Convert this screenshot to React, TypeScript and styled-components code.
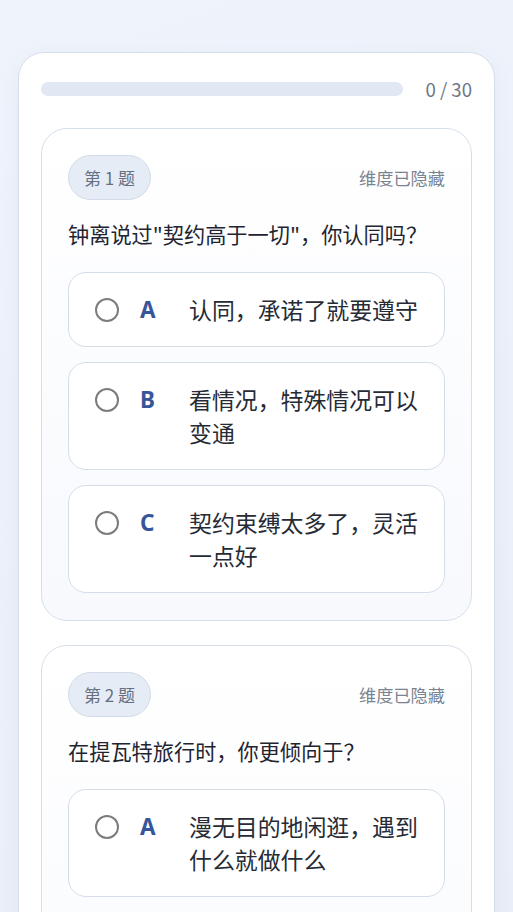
import React from "react";
import styled, { createGlobalStyle } from "styled-components";

const Global = createGlobalStyle`
  html, body { margin: 0; padding: 0; }
  body {
    font-family: "Noto Sans CJK SC", "Noto Sans", sans-serif;
    background: linear-gradient(160deg, #eff3fb 0%, #eaeff8 60%, #e8edf7 100%);
    min-height: 100vh;
  }
`;

const Page = styled.div`
  padding: 52px 18px 24px;
`;

const Shell = styled.div`
  background: #ffffff;
  border: 1px solid #d6deec;
  border-radius: 26px;
  padding: 22px;
  display: flex;
  flex-direction: column;
  gap: 26px;
  box-shadow: 0 6px 20px rgba(60, 80, 130, 0.05);
`;

const ProgressRow = styled.div`
  display: flex;
  align-items: center;
  gap: 22px;
`;

const Track = styled.div`
  flex: 1;
  height: 14px;
  border-radius: 7px;
  background: #e1e8f3;
`;

const Count = styled.div`
  font-size: 18.6px;
  line-height: 27px;
  color: #6e7686;
  white-space: nowrap;
`;

const QuestionList = styled.div`
  display: flex;
  flex-direction: column;
  gap: 24px;
`;

const QuestionCard = styled.div`
  border: 1px solid #d7dfec;
  border-radius: 26px;
  padding: 26px 26px 27px;
  background: linear-gradient(180deg, #ffffff 0%, #f7f9fd 100%);
`;

const Header = styled.div`
  display: flex;
  align-items: center;
  justify-content: space-between;
  margin-bottom: 18px;
`;

const Badge = styled.div`
  background: #e6ecf6;
  border: 1px solid #d2dbea;
  border-radius: 23px;
  padding: 10px 15px;
  font-size: 17px;
  line-height: 23px;
  color: #667082;
`;

const Hidden = styled.div`
  font-size: 17.2px;
  line-height: 23px;
  color: #7a8392;
`;

const Prompt = styled.div`
  font-size: 21.2px;
  line-height: 32px;
  color: #1f2430;
  margin-bottom: 22px;
`;

const Options = styled.div`
  display: flex;
  flex-direction: column;
  gap: 15px;
`;

const Option = styled.div`
  display: grid;
  grid-template-columns: 24px 28px 1fr;
  column-gap: 21px;
  align-items: start;
  border: 1px solid #d5ddeb;
  border-radius: 18px;
  background: #ffffff;
  padding: 20px 20px 20px 26px;
`;

const RadioCell = styled.div`
  height: 33px;
  display: flex;
  align-items: center;
`;

const Radio = styled.div`
  width: 24px;
  height: 24px;
  box-sizing: border-box;
  border: 2px solid #7c7c7c;
  border-radius: 50%;
  background: #fff;
`;

const Letter = styled.div`
  font-family: "Noto Sans", "Noto Sans CJK SC", sans-serif;
  font-weight: 700;
  font-size: 22.5px;
  line-height: 33px;
  color: #36559a;
`;

const OptionText = styled.div`
  font-size: 22.9px;
  line-height: 33px;
  color: #262b35;
`;

const questions = [
  {
    no: 1,
    text: "钟离说过\"契约高于一切\"，你认同吗？",
    options: [
      { key: "A", text: "认同，承诺了就要遵守" },
      { key: "B", text: "看情况，特殊情况可以变通" },
      { key: "C", text: "契约束缚太多了，灵活一点好" },
    ],
  },
  {
    no: 2,
    text: "在提瓦特旅行时，你更倾向于？",
    options: [
      { key: "A", text: "漫无目的地闲逛，遇到什么就做什么" },
      { key: "B", text: "提前规划好路线，按计划行动" },
      { key: "C", text: "跟着朋友走，大家开心就好" },
    ],
  },
];

export default function App() {
  return (
    <>
      <Global />
      <Page>
        <Shell>
          <ProgressRow>
            <Track />
            <Count>0 / 30</Count>
          </ProgressRow>
          <QuestionList>
            {questions.map((q) => (
              <QuestionCard key={q.no}>
                <Header>
                  <Badge>第 {q.no} 题</Badge>
                  <Hidden>维度已隐藏</Hidden>
                </Header>
                <Prompt>{q.text}</Prompt>
                <Options>
                  {q.options.map((o) => (
                    <Option key={o.key}>
                      <RadioCell>
                        <Radio />
                      </RadioCell>
                      <Letter>{o.key}</Letter>
                      <OptionText>{o.text}</OptionText>
                    </Option>
                  ))}
                </Options>
              </QuestionCard>
            ))}
          </QuestionList>
        </Shell>
      </Page>
    </>
  );
}
